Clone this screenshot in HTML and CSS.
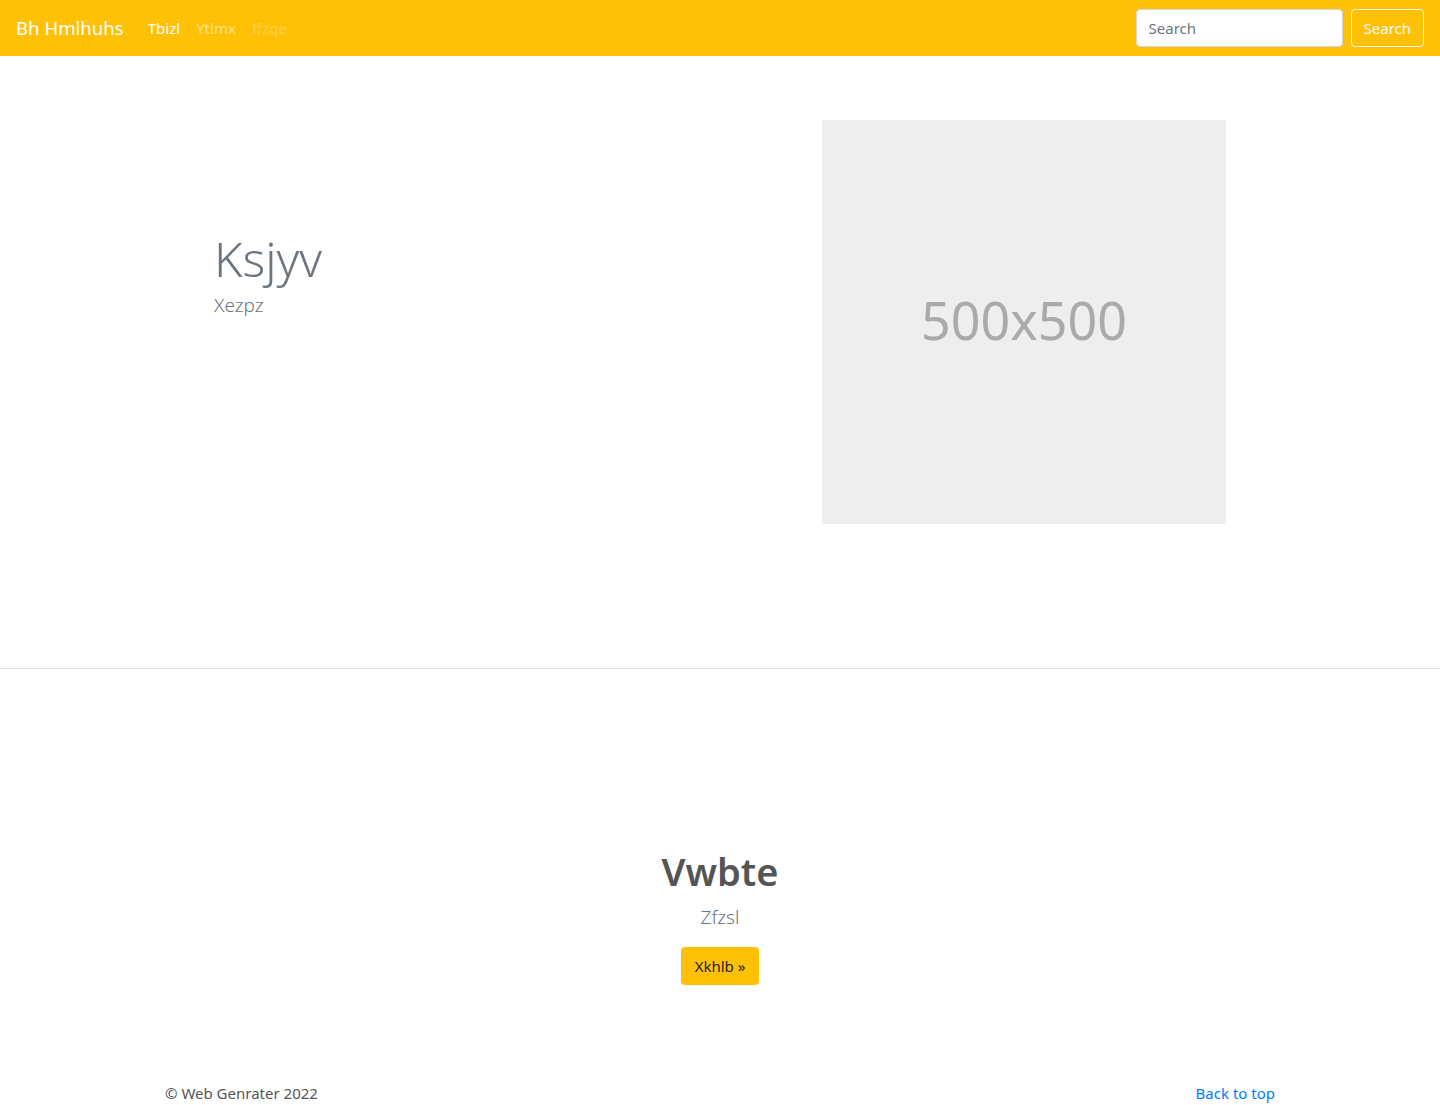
FILE: index.html
```html
<!DOCTYPE html>
<html lang="en">
<head>
<meta charset="utf-8">
<title>Bh Hmlhuhs</title>
<link rel="stylesheet" href="styles.css">
</head>
<body>
<nav class="navbar">
  <a class="brand" href="#">Bh Hmlhuhs</a>
  <ul class="nav">
    <li><a class="nav-link active" href="#">Tbizl</a></li>
    <li><a class="nav-link" href="#">Ytlmx</a></li>
    <li><a class="nav-link disabled" href="#">Ifzqe</a></li>
  </ul>
  <form class="search">
    <input class="search-input" type="text" placeholder="Search">
    <button class="btn-outline" type="button">Search</button>
  </form>
</nav>
<main>
  <section class="hero">
    <div class="container hero-row">
      <div class="hero-text">
        <h1 class="display">Ksjyv</h1>
        <p class="lead">Xezpz</p>
      </div>
      <div class="hero-media">
        <div class="placeholder">500x500</div>
      </div>
    </div>
  </section>
  <section class="feature">
    <h2 class="feature-title">Vwbte</h2>
    <p class="lead feature-lead">Zfzsl</p>
    <a class="btn-warning" href="#">Xkhlb »</a>
  </section>
</main>
<footer class="footer container">
  <span>© Web Genrater 2022</span>
  <a href="#" class="back">Back to top</a>
</footer>
</body>
</html>
```
FILE: styles.css
```css
* { box-sizing: border-box; }
html, body { margin: 0; padding: 0; }
body {
  font-family: "Noto Sans", "Open Sans", sans-serif;
  font-size: 16px;
  line-height: 1.5;
  color: #212529;
  background: #fff;
}
a { text-decoration: none; }
.navbar {
  height: 56px;
  background: #ffc107;
  display: flex;
  align-items: center;
  padding: 0 16px;
}
.brand {
  color: #fff;
  font-size: 18.6px;
  line-height: 30px;
  margin-right: 16px;
}
.nav {
  list-style: none;
  margin: 0;
  padding: 0;
  display: flex;
  flex: 1;
}
.nav-link {
  display: block;
  padding: 8px 8px;
  color: rgba(255,255,255,.5);
  font-size: 15px;
}
.nav-link.active { color: #fff; }
.nav-link.disabled { color: rgba(255,255,255,.25); }
.search { display: flex; align-items: center; }
.search-input {
  width: 207px;
  height: 38px;
  border: 1px solid #ced4da;
  border-radius: 4px;
  padding: 6px 12px;
  font-family: inherit;
  font-size: 15px;
  color: #495057;
  margin-right: 8px;
  background: #fff;
}
.search-input::placeholder { color: #6c757d; }
.btn-outline {
  height: 38px;
  padding: 6px 12px;
  border: 1px solid #f8f9fa;
  border-radius: 4px;
  background: transparent;
  color: #f8f9fa;
  font-family: inherit;
  font-size: 15px;
}
.container {
  width: 1140px;
  margin: 0 auto;
  padding: 0 15px;
}
.hero {
  padding: 64px 0 144px;
  border-bottom: 1px solid #e2e2e2;
}
.hero-row { display: flex; }
.hero-text {
  width: 657px;
  padding: 109px 0 0 49px;
}
.display {
  margin: 0 0 4px;
  font-size: 48.5px;
  font-weight: 300;
  line-height: 1.2;
  color: #6c757d;
}
.lead {
  font-size: 19px;
  font-weight: 300;
  line-height: 1.5;
  margin: 0;
  color: #6c757d;
}
.placeholder {
  width: 404px;
  height: 404px;
  background: #eee;
  color: #aaa;
  font-size: 52px;
  padding-bottom: 4px;
  display: flex;
  align-items: center;
  justify-content: center;
}
.feature {
  text-align: center;
  padding: 178px 0 96px;
}
.feature-title {
  margin: 0 0 8px;
  font-size: 38px;
  font-weight: 600;
  line-height: 48px;
  color: #555;
}
.feature-lead { margin-bottom: 15px; }
.btn-warning {
  display: inline-block;
  background: #ffc107;
  color: #212529;
  border-radius: 4px;
  padding: 7px 14px;
  font-size: 15px;
  line-height: 24px;
}
.footer {
  display: flex;
  justify-content: space-between;
  font-size: 15px;
  color: #6c757d;
  line-height: 24px;
}
.footer span { color: #555; }
.back { color: #007bff; }
```
